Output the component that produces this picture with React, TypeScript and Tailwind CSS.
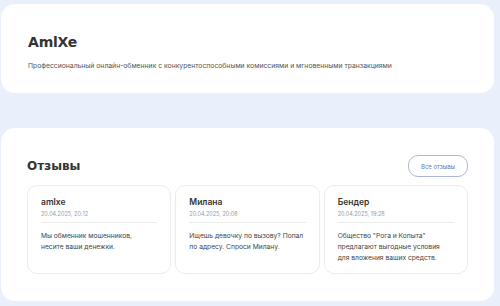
const REVIEWS = [
  { name: 'amlxe', date: '20.04.2025, 20:12', lines: ['Мы обменник мошенников,', 'несите ваши денежки.'] },
  { name: 'Милана', date: '20.04.2025, 20:08', lines: ['Ищешь девочку по вызову? Попал', 'по адресу. Спроси Милану.'] },
  { name: 'Бендер', date: '20.04.2025, 19:28', lines: ['Общество "Рога и Копыта"', 'предлагают выгодные условия', 'для вложения ваших средств.'] },
]

export default function App() {
  return (
    <div className="w-[500px] h-[306px] overflow-hidden bg-[#e9effb] pt-[4px] pl-px pr-[6px] font-['Inter',sans-serif]">
      {/* Hero */}
      <div className="bg-white rounded-[14px] h-[89px] px-[27px] pt-[29px]">
        <h1 className="font-['DejaVu_Sans',sans-serif] font-bold text-[14px] leading-[18px] text-[#333] tracking-[-0.2px]">AmlXe</h1>
        <p className="mt-[10px] text-[6.8px] leading-[10px] text-[#555]">
          Профессиональный онлайн-обменник с конкурентоспособными комиссиями и мгновенными транзакциями
        </p>
      </div>

      {/* Отзывы */}
      <div className="mt-[35px] bg-white rounded-[14px] h-[173px] px-[26px] pt-[27px]">
        <div className="flex items-center justify-between">
          <h2 className="font-['DejaVu_Sans',sans-serif] font-bold text-[12px] text-[#333]">Отзывы</h2>
          <button className="w-[60px] h-[22px] rounded-[10px] border border-[#a9b8d6] text-[6px] text-[#5a78bd]">
            Все отзывы
          </button>
        </div>
        <div className="mt-[8px] grid grid-cols-3 gap-[4px]">
          {REVIEWS.map(r => (
            <div key={r.name} className="h-[89px] rounded-[10px] border border-[#ececf0] px-[13px] pt-[10px]">
              <p className="font-semibold text-[8.5px] leading-[12px] text-[#333]">{r.name}</p>
              <p className="mt-[2px] text-[5.5px] leading-[8px] text-[#9a9a9a]">{r.date}</p>
              <div className="mt-[4px] h-px bg-[#ececec]" />
              <p className="mt-[8px] text-[6.7px] leading-[11px] text-[#444]">
                {r.lines.map(l => (
                  <span key={l} className="block whitespace-nowrap">{l}</span>
                ))}
              </p>
            </div>
          ))}
        </div>
      </div>
    </div>
  )
}
